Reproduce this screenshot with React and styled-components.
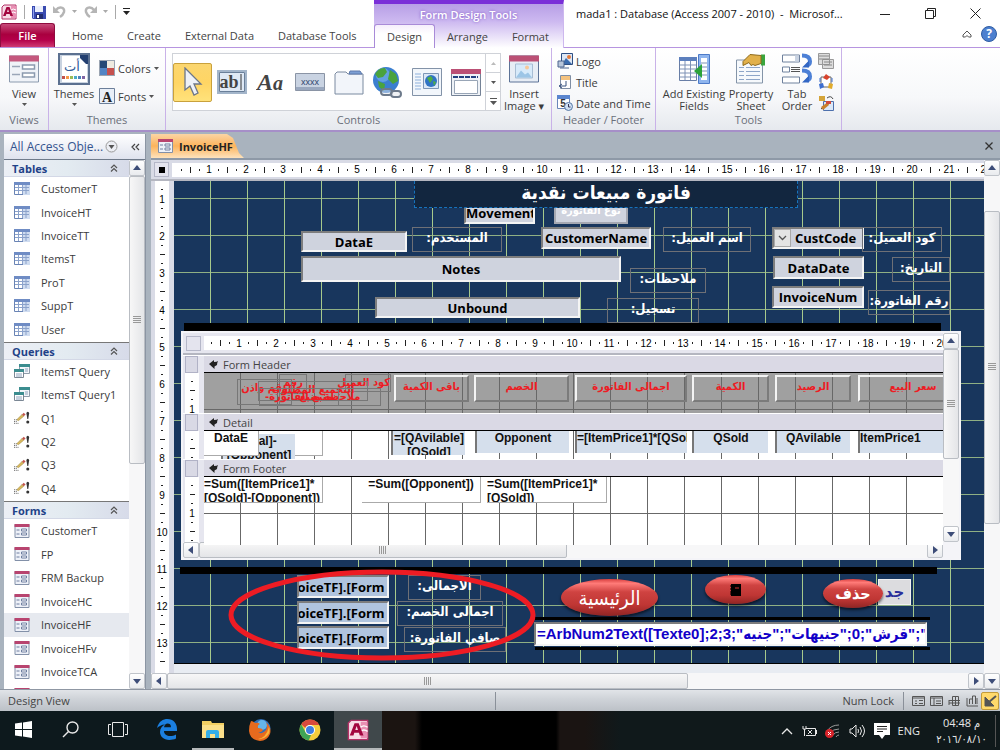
import React from "react";
import styled, { createGlobalStyle, css } from "styled-components";

const GlobalStyle = createGlobalStyle`
  * {
    box-sizing: border-box;
  }

  body {
    margin: 0;
    background: #a9b3be;
    font-family: "Open Sans", "DejaVu Sans", sans-serif;
    font-size: 11px;
    color: #3b3b3b;
  }

  button, input, select, textarea {
    font: inherit;
    color: inherit;
    margin: 0;
    padding: 0;
    border: 0;
    border-radius: 0;
    background: none;
    outline: none;
  }

  svg {
    display: block;
    flex: none;
  }
`;

const Shell = styled.div`
  display: flex;
  flex-direction: column;
  height: 100vh;
  overflow: hidden;
`;

/* ---------- title bar and tabs ---------- */

const Header = styled.header`
  display: flex;
  flex: none;
  height: 48px;
  background: #fff;
`;

const HeaderLeft = styled.div`
  display: flex;
  flex-direction: column;
  width: 374px;
  border-bottom: 1px solid #b795e0;
`;

const QuickAccess = styled.div`
  display: flex;
  align-items: center;
  gap: 7px;
  height: 24px;
  padding: 0 1px;
`;

const QuickButton = styled.button`
  display: flex;
  align-items: center;
  gap: 6px;
`;

const Divider = styled.span`
  width: 1px;
  height: 14px;
  background: #a9a9a9;
`;

const Tabs = styled.nav`
  display: flex;
  flex: 1;
`;

const Tab = styled.button`
  flex: none;
  padding: 0 12px;
  height: 24px;
  color: #444;
  white-space: nowrap;

  ${(p) =>
    p.$file &&
    css`
      width: 55px;
      margin-right: 5px;
      color: #fff;
      font-weight: 600;
      border-radius: 3px 3px 0 0;
      border: 1px solid #8f0c3f;
      border-bottom: 0;
      background: linear-gradient(#c64a78, #a9003f 45%, #b5004a 70%, #cf3a72);
    `}

  ${(p) =>
    p.$active &&
    css`
      border: 1px solid #a98bd8;
      border-bottom: 0;
      border-radius: 3px 3px 0 0;
      background: linear-gradient(#f6effc, #fff 40%);
    `}
`;

const Context = styled.div`
  display: flex;
  flex-direction: column;
  width: 190px;
  border-top: 4px solid #7a2fd8;
  border-right: 1px solid #cdb8ee;
  background: linear-gradient(#b79fe6, #cdb9f0 40%, #fff);
`;

const ContextTitle = styled.div`
  height: 20px;
  line-height: 21px;
  text-align: center;
  font-weight: 600;
  color: #fff;
  text-shadow: 0 0 3px #7b4fc4;
`;

const HeaderRight = styled.div`
  display: flex;
  flex-direction: column;
  flex: 1;
  min-width: 0;
  border-bottom: 1px solid #b795e0;
`;

const TitleRow = styled.div`
  display: flex;
  align-items: center;
  height: 26px;
  padding: 0 19px 0 12px;
  color: #111;
`;

const Title = styled.h1`
  flex: 1;
  margin: 0;
  font-size: 11px;
  font-weight: 400;
  white-space: nowrap;
`;

const WindowButtons = styled.div`
  display: flex;
  gap: 34px;
`;

const HelpRow = styled.div`
  display: flex;
  justify-content: flex-end;
  align-items: center;
  gap: 9px;
  padding-right: 3px;
`;

/* ---------- ribbon ---------- */

const RibbonBar = styled.div`
  display: flex;
  flex: none;
  height: 84px;
  background: linear-gradient(#fff, #f7f8fa 60%, #e6e9ee);
  border-bottom: 2px solid #a68fc8;
`;

const Group = styled.section`
  display: flex;
  flex-direction: column;
  width: ${(p) => p.$width}px;
  border-right: 1px solid #c9b2e8;
`;

const GroupBody = styled.div`
  display: flex;
  flex: 1;
  align-items: flex-start;
  gap: ${(p) => p.$gap || 0}px;
  padding: 5px ${(p) => p.$pad || 0}px 0;
`;

const GroupName = styled.div`
  height: 18px;
  line-height: 16px;
  text-align: center;
  color: #6a6f7a;
`;

const BigButton = styled.button`
  display: flex;
  flex-direction: column;
  align-items: center;
  width: ${(p) => p.$width}px;
  gap: 3px;
  line-height: 12px;
  white-space: nowrap;

  > svg:first-child {
    height: 32px;
  }
`;

const SmallColumn = styled.div`
  display: flex;
  flex-direction: column;
  gap: ${(p) => p.$gap}px;
  padding-top: ${(p) => p.$top || 0}px;
`;

const SmallButton = styled.button`
  display: flex;
  align-items: center;
  gap: 3px;
  height: 16px;
  white-space: nowrap;
`;

const Gallery = styled.div`
  display: flex;
  width: 329px;
  height: 58px;
  background: #fff;
  border: 1px solid #cfd2d8;
`;

const GalleryItem = styled.button`
  display: flex;
  align-items: center;
  justify-content: center;
  align-self: center;
  width: 39px;
  height: 39px;
  border-radius: 2px;
  ${(p) =>
    p.$on &&
    css`
      border: 1px solid #c9a13c;
      background: linear-gradient(#fbd66f, #ffd564 50%, #ffe27b);
    `}
`;

const GalleryScroll = styled.div`
  display: flex;
  flex-direction: column;
  flex: 1;
  border-left: 1px solid #cfd2d8;
`;

const GalleryArrow = styled.button`
  display: flex;
  flex: 1;
  align-items: center;
  justify-content: center;
  border-bottom: 1px solid #cfd2d8;

  &:last-child {
    border-bottom: 0;
  }
`;

/* ---------- navigation pane ---------- */

const Work = styled.main`
  display: flex;
  flex: 1;
  min-height: 0;
  gap: 5px;
  padding: 2px 0 0 4px;
  background: #a9b3be;
`;

const NavPane = styled.aside`
  display: flex;
  flex-direction: column;
  width: 142px;
  background: #fff;
  border-right: 1px solid #8b95a3;
`;

const NavHeader = styled.div`
  display: flex;
  align-items: center;
  height: 26px;
  flex: none;
  padding: 0 5px 0 6px;
  color: #34548f;
  font-size: 12px;
  background: linear-gradient(#fff, #dfe3ee);
  border-bottom: 1px solid #6f7a8a;

  span {
    flex: 1;
    white-space: nowrap;
  }
`;

const NavBody = styled.div`
  display: flex;
  flex: 1;
  min-height: 0;
`;

const NavLists = styled.div`
  flex: 1;
  overflow: hidden;
`;

const NavHeading = styled.h2`
  display: flex;
  align-items: center;
  justify-content: space-between;
  height: 17px;
  margin: 0;
  padding: 0 11px 0 8px;
  font-size: 11px;
  font-weight: 700;
  color: #1f4288;
  background: linear-gradient(90deg, #eceff5, #e3ebf1 50%, #d7dbe9);
  border-bottom: 1px solid #d3d8e6;
`;

const NavList = styled.ul`
  display: flex;
  flex-direction: column;
  height: ${(p) => p.$height}px;
  margin: 0;
  padding: 0 0 1px;
  list-style: none;
  border-bottom: 1px solid #777;
`;

const NavItem = styled.li`
  display: flex;
  flex: 1;
  align-items: center;
  gap: 11px;
  padding-left: 10px;
  white-space: nowrap;
  background: ${(p) => (p.$on ? "#e6e9ef" : "none")};

  svg {
    width: 16px;
  }
`;

/* ---------- scroll bars ---------- */

const Bar = styled.div`
  display: flex;
  flex: none;
  flex-direction: ${(p) => (p.$across ? "row" : "column")};
  ${(p) => (p.$across ? "height: 16px;" : "width: 16px;")}
  background: #f7f7f8;
`;

const BarButton = styled.button`
  display: flex;
  align-items: center;
  justify-content: center;
  width: 16px;
  height: 16px;
  flex: none;
  border: 1px solid #c0c4ca;
  border-radius: 2px;
  background: linear-gradient(#fff, #e9ebee);
`;

const BarSpace = styled.div`
  flex: ${(p) => p.$size} 1 0;
`;

const BarThumb = styled(BarSpace)`
  display: flex;
  align-items: center;
  justify-content: center;
  border: 1px solid #b9bdc3;
  border-radius: 2px;
  background: linear-gradient(
    ${(p) => (p.$across ? "180deg" : "90deg")},
    #f7f7f7,
    #e4e5e8
  );
`;

const Grip = styled.span`
  width: 8px;
  height: 8px;
  background: repeating-linear-gradient(
    ${(p) => (p.$across ? "90deg" : "180deg")},
    #999 0 1px,
    transparent 1px 2px
  );
`;

/* ---------- document ---------- */

const Doc = styled.section`
  display: flex;
  flex: 1;
  flex-direction: column;
  min-width: 0;
`;

const DocTabs = styled.div`
  display: flex;
  align-items: center;
  justify-content: space-between;
  height: 24px;
  flex: none;
  padding-right: 7px;
  color: #333;
`;

const DocTab = styled.button`
  display: flex;
  align-items: center;
  gap: 6px;
  align-self: stretch;
  width: 93px;
  padding-left: 7px;
  font-weight: 700;
  color: #222;
  clip-path: polygon(0 0, 76px 0, 82px 4px, 88px 19px, 93px 24px, 0 24px);
  background: linear-gradient(#fbd5a5, #fcb45c 50%, #fde2bd);
`;

const DocBody = styled.div`
  display: flex;
  flex: 1;
  min-height: 0;
  border-top: 2px solid #8e99a7;
  background: #d9dbe6;
`;

const DocMain = styled.div`
  display: flex;
  flex: 1;
  flex-direction: column;
  min-width: 0;
`;

const RulerRow = styled.div`
  display: flex;
  align-items: center;
  height: ${(p) => p.$height}px;
  gap: 3px;
  padding-left: 3px;
  flex: none;
  border-bottom: 2px solid #b4b6c0;
`;

const Corner = styled.div`
  display: flex;
  align-items: center;
  justify-content: center;
  width: 15px;
  height: 15px;
  border: 1px solid #b5b7c8;
  background: #e4e4ee;
`;

const RulerTrack = styled.div`
  display: flex;
  flex: 1;
  height: 14px;
  overflow: hidden;
  padding-left: ${(p) => p.$inset}px;
  background: #fff;
  font: 10px "Liberation Sans", Arial, sans-serif;
  color: #000;
`;

const Tick = styled.span`
  display: flex;
  align-items: center;
  justify-content: center;
  flex: none;
  width: ${(p) => (p.$last ? 10 : 9)}px;

  &::before {
    content: "";
    width: 1px;
    height: ${(p) => p.$length}px;
    background: #222;
  }
`;

const Row = styled.div`
  display: flex;
  flex: 1;
  min-height: 0;
`;

const SideRuler = styled.div`
  display: flex;
  flex-direction: column;
  width: 14px;
  margin: 0 5px 0 4px;
  padding-top: 4px;
  overflow: hidden;
  background: #fff;
  font: 10px "Liberation Sans", Arial, sans-serif;
  color: #000;
`;

const SideTick = styled.span`
  display: flex;
  align-items: center;
  justify-content: center;
  flex: none;
  height: ${(p) => (p.$last ? 10 : 9)}px;

  &::before {
    content: "";
    height: 1px;
    width: ${(p) => p.$length}px;
    background: #222;
  }
`;

const CanvasArea = styled.div`
  flex: 1;
  min-width: 0;
  overflow: hidden;
  background: #e8ecf2;
`;

const Canvas = styled.div`
  position: relative;
  height: 483px;
  overflow: hidden;
  border-bottom: 1px solid #000;
  background-color: #18365d;
  background-image: linear-gradient(90deg, #a6c98c 1px, transparent 1px),
    linear-gradient(#8fb084 1px, transparent 1px);
  background-size: 37px 37px;
  background-position: 36px 17px;
  font-size: 13px;
`;

/* every control on the design surface has its own place: x, y, w, h */
const place = css`
  position: absolute;
  left: ${(p) => p.$at[0]}px;
  top: ${(p) => p.$at[1]}px;
  width: ${(p) => p.$at[2]}px;
  height: ${(p) => p.$at[3]}px;
`;

const FormTitle = styled.div`
  ${place}
  direction: rtl;
  text-align: center;
  color: #fff;
  font: bold 19px/22px "DejaVu Sans Condensed", "DejaVu Sans", sans-serif;
  background: #12263f;
  border: 1px dashed #1673bd;
  border-top: 0;
`;

const sunken = css`
  border: 2px solid #f4f4f4;
  border-top-color: #7d7d7d;
  border-left-color: #7d7d7d;
`;

const Field = styled.input`
  ${place}
  ${sunken}
  text-align: center;
  font-weight: 700;
  color: #000;
  background: ${(p) => (p.$total ? "#b0c4de" : "#cfd3de")};
  text-indent: ${(p) => (p.$total ? -4 : 0)}px;
`;

const AmountField = styled(Field)`
  text-align: left;
  padding-left: 1px;
  font: bold 15px "Liberation Sans", "DejaVu Sans Condensed", "DejaVu Sans", sans-serif;
  color: #1200c8;
  background: #fff;
`;

const Combo = styled.div`
  ${place}
  ${sunken}
  display: flex;
  background: #cfd3de;

  select {
    appearance: none;
    flex: 1;
    min-width: 0;
    padding-left: 4px;
    font-weight: 700;
    color: #000;
  }
`;

const ComboArrow = styled.span`
  display: flex;
  align-items: center;
  justify-content: center;
  width: 17px;
  background: #e4e4e4;
  border: 1px solid #aaa;
`;

const Label = styled.label`
  ${place}
  direction: rtl;
  text-align: center;
  white-space: nowrap;
  color: #fff;
  font: bold 13px/20px "DejaVu Sans Condensed", "DejaVu Sans", sans-serif;
  border: 1px solid #6e7076;
`;

const TypeLabel = styled(Label)`
  border: 2px solid #a5a8b2;
  border-top: 0;
  background: #cfd3de;
  font-size: 11px;
  line-height: 14px;
`;

const Line = styled.div`
  ${place}
  background: #000;
`;

const RedButton = styled.button`
  ${place}
  border-radius: 50%;
  display: flex;
  justify-content: center;
  align-items: center;
  color: #fff;
  font: bold 16px "DejaVu Sans Condensed", "DejaVu Sans", sans-serif;
  background: linear-gradient(#d9403f, #ff7b78 12%, #cf4341 35%, #bf3634 70%, #8f2524);
  box-shadow: 0 2px 3px rgba(0, 0, 0, 0.6);

  ${(p) =>
    p.$big &&
    css`
      font-size: 20px;
      font-weight: 400;
    `}
`;

const PlainButton = styled.button`
  ${place}
  color: #2a2f9b;
  font: bold 15px "DejaVu Sans", sans-serif;
  background: #dcdcdf;
  border: 1px solid #f2f2f2;
`;

const Ring = styled.svg`
  ${place}
  pointer-events: none;
`;

/* ---------- sub form ---------- */

const SubForm = styled.div`
  ${place}
  display: flex;
  flex-direction: column;
  border: 2px solid #f4f4f8;
  background: #e6e6ef;
`;

const SubMain = styled.div`
  display: flex;
  flex: 1;
  flex-direction: column;
  min-width: 0;
`;

const Section = styled.section`
  display: grid;
  grid-template-columns: 14px 1fr;
  grid-template-rows: 17px ${(p) => p.$height}px;
  column-gap: 5px;
  padding: 0 0 0 2px;
  border-top: 1px solid #fff;
`;

const SectionCorner = styled.div`
  width: 13px;
  background: #d9d9e5;
  border: 1px solid #b1b2c6;
`;

const SectionTitle = styled.h3`
  display: flex;
  align-items: center;
  gap: 4px;
  margin: 0;
  padding-left: 5px;
  font-size: 11px;
  font-weight: 400;
  color: #444;
  background: #dad9e5;
  border-bottom: 1px solid #000;
`;

const SectionRuler = styled(SideRuler)`
  margin: 0;
`;

const SectionGrid = styled.div`
  position: relative;
  overflow: hidden;
  font: bold 12px/14px "Liberation Sans", Arial, sans-serif;
  color: #111;
  background-color: ${(p) => (p.$grey ? "#a0a0a0" : "#fff")};
  background-image: linear-gradient(90deg, #686868 1px, transparent 1px),
    linear-gradient(#686868 1px, transparent 1px);
  background-size: 37px 37px;
  background-position: 36px 36px;
`;

const HeadLabel = styled.div`
  ${place}
  direction: rtl;
  text-align: center;
  white-space: nowrap;
  color: #ed1c24;
  font: bold 11px/20px "DejaVu Sans Condensed", "DejaVu Sans", sans-serif;
  border: 2px solid #7b7b7b;
  border-top-color: #f4f4f4;
  border-left-color: #f4f4f4;
`;

const LooseLabel = styled(HeadLabel)`
  line-height: 16px;
  border: 1px solid #777;
`;

const Cell = styled.textarea`
  ${place}
  resize: none;
  overflow: hidden;
  text-align: ${(p) => p.$align || "center"};
  background: #d5dfec;
  border-left: 2px solid #777;
  white-space: pre;
`;

const WhiteCell = styled(Cell)`
  background: #fff;
  border: 1px solid #aaa;
  border-top: 0;
  border-left-width: 0;
`;

const SubFooter = styled.div`
  display: flex;
  flex: none;
  padding-right: 16px;
  background: #f4f4f8;

  > div {
    width: 100%;
  }
`;

/* ---------- status bar and task bar ---------- */

const StatusBar = styled.footer`
  display: flex;
  align-items: center;
  height: 22px;
  flex: none;
  padding: 0 1px 0 8px;
  color: #444;
  background: linear-gradient(#e1e4e8, #d0d4d9 40%, #bcc1c7);
  border-top: 1px solid #8f97a3;
`;

const StatusPart = styled.span`
  flex: ${(p) => p.$grow} 1 0;
  line-height: 18px;
  border-right: 1px solid #8a9099;
  text-align: ${(p) => p.$align || "left"};
  padding-right: 9px;
`;

const ViewButton = styled.button`
  display: flex;
  align-items: center;
  justify-content: center;
  width: 18px;
  height: 18px;
  ${(p) =>
    p.$on &&
    css`
      border: 1px solid #c29b3a;
      border-radius: 2px;
      background: #ffd96b;
    `}
`;

const ViewButtons = styled.div`
  display: flex;
  padding-left: 5px;
`;

const TaskBar = styled.footer`
  display: flex;
  flex: none;
  height: 39px;
  color: #e8e8e8;
  background: linear-gradient(
    90deg,
    #0d191d 0 334px,
    #1b1411 381px 415px,
    #000 422px 556px,
    #1a1412 560px 585px,
    #10191b 620px
  );
`;

const TaskButton = styled.button`
  display: flex;
  align-items: center;
  justify-content: center;
  width: ${(p) => p.$width || 48}px;
  border-bottom: 2px solid ${(p) => (p.$open ? "#b5b9ba" : "transparent")};
  background: ${(p) => (p.$on ? "#40484b" : "none")};
`;

const Tray = styled.div`
  display: flex;
  align-items: center;
  gap: 8px;
  margin-left: auto;
  padding-right: 4px;
`;

const Clock = styled.time`
  width: 68px;
  line-height: 16px;
  text-align: center;
  border-right: 1px solid #555;
  font-family: "Open Sans", "DejaVu Sans Condensed", "DejaVu Sans", sans-serif;
`;

/* ---------- icons ---------- */

const Caret = ({ color = "#555", up, size = 5 }) => (
  <svg width={size} height="3" viewBox="0 0 6 3" preserveAspectRatio="none">
    <path d={up ? "M0 3L3 0L6 3z" : "M0 0h6L3 3z"} fill={color} />
  </svg>
);

const ARROWS = {
  up: "M0 6L4 1L8 6z",
  down: "M0 2h8L4 7z",
  left: "M6 0v8L1 4z",
  right: "M2 0v8L7 4z",
};

const Arrow = ({ to }) => (
  <svg width="8" height="8" viewBox="0 0 8 8">
    <path d={ARROWS[to]} fill="#3d4d78" />
  </svg>
);

const AccessIcon = ({ size = 16 }) => (
  <svg width={size} height={size} viewBox="0 0 16 16">
    <path d="M3 1h12v14H1V3z" fill="#f7dbe6" stroke="#b53268" />
    <path d="M10 2h5v12h-5z" fill="#e98fb3" />
    <path d="M10 6q2-2 5 0M10 9q2-2 5 0" stroke="#fff" fill="none" />
    <path
      d="M2 12L5.500 3h3L12 12H9.300L8.700 10H5.300L4.700 12zM6 8h2L7 5z"
      fill="#a3063f"
    />
  </svg>
);

const SaveIcon = () => (
  <svg width="14" height="14" viewBox="0 0 14 14">
    <path d="M0 1h14v13H1L0 13z" fill="#3a4bb0" />
    <path d="M3 1h8v6H3z" fill="#e9eefb" />
    <path d="M4 9h7v5H4z" fill="#222c6e" />
    <path d="M5 10h2v3H5z" fill="#fff" />
    <path d="M1 2h1v11H1z" fill="#8fa0ee" />
  </svg>
);

const UndoIcon = ({ flip }) => (
  <svg width="13" height="13" viewBox="0 0 13 13">
    <g transform={flip ? "matrix(-1 0 0 1 13 0)" : undefined}>
      <path
        d="M3 5C6 1 12 2 11 7q-1 3-4 5"
        fill="none"
        stroke="#b5b5b5"
        strokeWidth="2.400"
      />
      <path d="M0 1v7h7z" fill="#b5b5b5" />
    </g>
  </svg>
);

const FormIcon = () => (
  <svg width="15" height="14" viewBox="0 0 15 14">
    <path d="M.5.5h14v13H.5z" fill="#eef1f8" stroke="#8290a8" />
    <path d="M0 0h15v3H0z" fill="#b8446f" />
    <path d="M2 6h3M2 10h3" stroke="#6e7fa0" />
    <path d="M7 5h5v2H7zM7 9h5v2H7z" fill="#fff" stroke="#6e7fa0" />
  </svg>
);

const TableIcon = () => (
  <svg width="16" height="13" viewBox="0 0 16 13">
    <path d="M.5.5h15v12H.5z" fill="#fff" stroke="#6983b4" />
    <path d="M0 0h16v3H0z" fill="#6f8cc4" />
    <path d="M9 3h7v10H9z" fill="#cfdcf0" />
    <path d="M1 5.500h14M1 8.500h14M4.500 3v9M8.500 3v9M12 3v9" stroke="#8ba2cb" />
  </svg>
);

const QueryIcon = () => (
  <svg width="16" height="15" viewBox="0 0 16 15">
    <path d="M5.500.5h10v9h-10z" fill="#f3f6fa" stroke="#8f9cab" />
    <path d="M5 0h11v3H5z" fill="#3b8d8f" />
    <path d="M.5 5.500h9v8h-9z" fill="#fff" stroke="#7b8794" />
    <path d="M0 5h10v3H0z" fill="#3b8d8f" />
    <path d="M2 10h6M2 12h6M11 5h3M11 7h3" stroke="#8fa3bd" />
  </svg>
);

const ActionIcon = () => (
  <svg width="18" height="16" viewBox="0 0 18 14">
    <path d="M3 9L9 3l2 2-6 5z" fill="#d9b95d" stroke="#8e7835" strokeWidth=".5" />
    <path d="M9 3l2-2 2 2-2 2z" fill="#c2564e" />
    <path d="M0 9h1M0 11h1M0 13h1M2 11h1M2 13h1M4 13h1M2 9h1" stroke="#444" />
    <path d="M14 2q0-2 1.500-2T17 2l-1 6h-1z" fill="#333" />
    <circle cx="15.500" cy="11.500" r="1.700" fill="#333" />
  </svg>
);

const ChevronsUp = () => (
  <svg width="8" height="8" viewBox="0 0 8 8">
    <path d="M1 4l3-3 3 3M1 7.500l3-3 3 3" fill="none" stroke="#555" strokeWidth="1.200" />
  </svg>
);

const ChevronsLeft = () => (
  <svg width="9" height="8" viewBox="0 0 9 8">
    <path d="M4 1L1 4l3 3M8 1L5 4l3 3" fill="none" stroke="#444" strokeWidth="1.200" />
  </svg>
);

const RoundMenu = () => (
  <svg width="13" height="13" viewBox="0 0 13 13">
    <circle cx="6.500" cy="6.500" r="5.500" fill="#eceef4" stroke="#999" />
    <path d="M3.500 5h6l-3 4z" fill="#555" />
  </svg>
);

const ViewIcon = () => (
  <svg width="30" height="27" viewBox="0 0 30 27">
    <path d="M.5.5h29v26H.5z" fill="#f0f3f8" stroke="#8b9aae" />
    <path d="M0 0h30v6H0z" fill="#c4577d" />
    <path d="M3 11h8M3 19h8" stroke="#9aa6b8" strokeWidth="1.500" />
    <path d="M13.500 9.500h12v4h-12zM13.500 17.500h12v4h-12z" fill="#fff" stroke="#8b9aae" strokeWidth="1.500" />
  </svg>
);

const ThemesIcon = () => (
  <svg width="32" height="32" viewBox="0 0 32 32">
    <path d="M1 1h30v30H1z" fill="#c9d3e0" stroke="#5b7090" strokeWidth="2" />
    <path d="M4 3h18l7 7v19H4z" fill="#fff" />
    <path d="M22 2h8v9h-2l-6-6z" fill="#233f70" />
    <text x="14" y="18" textAnchor="middle" fontSize="13" fontFamily="DejaVu Sans" fill="#2f5a99">
      أت
    </text>
    {["#c0504d", "#f79646", "#9bbb59", "#4bacc6", "#4f81bd", "#8064a2"].map((c, i) => (
      <rect key={c} x={4 + i * 4} y="23" width="3" height="3" fill={c} />
    ))}
  </svg>
);

const ColorsIcon = () => (
  <svg width="16" height="16" viewBox="0 0 16 16">
    <path d="M0 0h16v16H0z" fill="#9aa4b2" />
    <path d="M1 1h7v7H1z" fill="#244877" />
    <path d="M8 1h7v7H8z" fill="#eeeae0" />
    <path d="M1 8h7v7H1z" fill="#5284c4" />
    <path d="M8 8h7v7H8z" fill="#c5504e" />
  </svg>
);

const FontsIcon = () => (
  <svg width="16" height="16" viewBox="0 0 16 16">
    <path d="M.5.5h15v15H.5z" fill="#e9eff8" stroke="#6c7f9a" />
    <text x="8" y="14" textAnchor="middle" fontSize="14" fontWeight="bold" fontFamily="Liberation Serif" fill="#222">
      A
    </text>
  </svg>
);

const PointerIcon = () => (
  <svg width="20" height="30" viewBox="0 0 20 30">
    <path
      d="M2 1v22l5-4 4 9 4-2-4-9h7z"
      fill="#eef1f7"
      stroke="#6c7688"
      strokeWidth="1.300"
    />
  </svg>
);

const TextBoxIcon = () => (
  <svg width="30" height="24" viewBox="0 0 30 24">
    <path d="M1 1h28v22H1z" fill="#dfe9f5" stroke="#a3b5ca" strokeWidth="2" />
    <path d="M2.500 2.500h25v19h-25z" fill="none" stroke="#6a7f99" />
    <text x="12" y="18" textAnchor="middle" fontSize="18" fontWeight="bold" fontFamily="Liberation Serif" fill="#444">
      ab
    </text>
    <path d="M24 4v16" stroke="#333" />
  </svg>
);

const LabelIcon = () => (
  <svg width="30" height="26" viewBox="0 0 30 26">
    <text x="1" y="21" fontSize="24" fontStyle="italic" fontWeight="bold" fontFamily="Liberation Serif" fill="#444">
      A
    </text>
    <text x="17" y="21" fontSize="20" fontStyle="italic" fontWeight="bold" fontFamily="Liberation Serif" fill="#444">
      a
    </text>
  </svg>
);

const ButtonIcon = () => (
  <svg width="30" height="18" viewBox="0 0 30 18">
    <path d="M.5.5h29v17H.5z" fill="#c9d3e2" stroke="#8a94a5" />
    <path d="M1 14h28v3H1z" fill="#9aa8bf" />
    <text x="15" y="12" textAnchor="middle" fontSize="9" fontFamily="Liberation Sans" fill="#30456f">
      xxxx
    </text>
  </svg>
);

const TabIcon = () => (
  <svg width="30" height="26" viewBox="0 0 30 26">
    <path d="M1 25V5l2-2h9l2 2h15v20z" fill="#f2f5fa" stroke="#7b8aa0" />
    <path d="M15 5l1-3h10l2 3z" fill="#7d9fd4" stroke="#5c79ab" />
  </svg>
);

const GlobeIcon = () => (
  <svg width="31" height="32" viewBox="0 0 31 32">
    <circle cx="14" cy="14" r="13" fill="#3b7fd0" />
    <circle cx="11" cy="9" r="7" fill="#7db8ee" opacity=".6" />
    <path d="M3 8q4-7 10-6l2 4-4 5-5 1zM18 4l6 4 2 7-5 3-5-5zM6 15l7 3-1 7-5-4z" fill="#4aa33e" />
    <g fill="#dfe4ea" fillOpacity=".5" stroke="#6d7a8b" strokeWidth="2">
      <rect x="9" y="23" width="11" height="6" rx="3" />
      <rect x="19" y="25" width="10" height="6" rx="3" />
    </g>
  </svg>
);

const WebIcon = () => (
  <svg width="30" height="28" viewBox="0 0 30 28">
    <path d="M.5.5h29v27H.5z" fill="#f2f6fb" stroke="#8393a8" />
    <path d="M3 6h6M3 9h6M3 12h6M3 15h6M3 18h6M3 21h6" stroke="#8db0dc" />
    <path d="M11.500 5.500h15v15h-15z" fill="#dbe8f7" stroke="#7d96b7" />
    <circle cx="19" cy="13" r="6" fill="#2f73c4" />
    <path d="M15 10l4-2 2 3-3 4zM21 13l3 1-2 4z" fill="#4fae45" />
  </svg>
);

const NavControlIcon = () => (
  <svg width="30" height="27" viewBox="0 0 30 27">
    <path d="M.5.5h29v26H.5z" fill="#eef2f7" stroke="#748296" />
    <path d="M0 0h30v5H0z" fill="#bb5075" />
    <path d="M2 8h25" stroke="#233f80" strokeWidth="2" strokeDasharray="5 1" />
    <path d="M3.500 11.500h23v13h-23z" fill="#fff" stroke="#98a5b6" />
  </svg>
);

const PictureIcon = () => (
  <svg width="30" height="27" viewBox="0 0 30 27">
    <path d="M.5.5h29v26H.5z" fill="#e7edf5" stroke="#5d7397" />
    <path d="M0 0h30v6H0z" fill="#bb5075" />
    <path d="M6.500 8.500h17v14h-17z" fill="#d7eafa" stroke="#a7bdd4" />
    <path d="M7 22l5-7 4 4 3-2 4 5z" fill="#9cc5e6" />
    <circle cx="18" cy="12" r="2" fill="#f8c898" />
  </svg>
);

const LogoIcon = () => (
  <svg width="16" height="16" viewBox="0 0 16 16">
    <path d="M4.500.5h11v11h-11z" fill="#dce7f5" stroke="#2f4f83" />
    <path d="M5 11l4-6 6 6z" fill="#3c6cae" />
    <circle cx="12" cy="4" r="2" fill="#e47a3b" />
    <path d="M1 8h6v6H1zM3 15h9" fill="#b8c6da" stroke="#4d658e" />
  </svg>
);

const TitleIcon = () => (
  <svg width="16" height="16" viewBox="0 0 16 16">
    <path d="M3.500 1.500h10v13h-10z" fill="#fff" stroke="#7f8ea4" />
    <path d="M4 2h9v4H4z" fill="#f4c27e" />
    <path d="M9 7v5H3M5 10l-3 2 3 2" fill="none" stroke="#38527f" />
  </svg>
);

const DateIcon = () => (
  <svg width="16" height="16" viewBox="0 0 16 16">
    <path d="M.5.5h12v13H.5z" fill="#fff" stroke="#6a86b9" />
    <path d="M0 0h13v4H0z" fill="#5b86cf" />
    <text x="6" y="12" textAnchor="middle" fontSize="10" fontWeight="bold" fontFamily="Liberation Sans" fill="#333">
      5
    </text>
    <circle cx="11.500" cy="11.500" r="4" fill="#cfe0f3" stroke="#5577a5" />
    <path d="M11.500 9v3h2" fill="none" stroke="#335" />
  </svg>
);

const FieldsIcon = () => (
  <svg width="32" height="30" viewBox="0 0 32 30">
    <path d="M1.500 3.500h17v23h-17z" fill="#fff" stroke="#687ea6" />
    <path d="M1 3h18v4H1z" fill="#5c7fbd" />
    <path d="M2 11h16M2 15h16M2 19h16M2 23h16M7 7v19M12.500 7v19" stroke="#7e92b5" />
    <path d="M20.500.5h11v29h-11z" fill="#8fb5ee" stroke="#4c7ac8" />
    <path d="M23 4h6v22h-6z" fill="#fff" />
    <path d="M23 9h6M23 13h6M23 17h6M23 21h6" stroke="#7e92b5" />
    <path d="M24 10v14l-8-7z" fill="#2ca33a" />
  </svg>
);

const SheetIcon = () => (
  <svg width="32" height="31" viewBox="0 0 32 31">
    <path d="M1.500 6.500h26v23h-26z" fill="#f6f9fc" stroke="#8494a8" />
    <path d="M4 14h5M4 18h5M4 22h5M4 26h5M11 14h14M11 18h14M11 22h14M11 26h14" stroke="#8ea6c8" />
    <path d="M26 1h4v11h-4z" fill="#3aa53d" />
    <path d="M26 2L15 1 8 8v4l6-3 2 3 2-1 2 1 6-2z" fill="#e1b04a" stroke="#8e6a1c" />
  </svg>
);

const OrderIcon = () => (
  <svg width="32" height="31" viewBox="0 0 32 31">
    <g fill="#fff" stroke="#6f819d">
      <path d="M1.500 1.500h17v7h-17zM1.500 13.500h7v5h-7zM1.500 23.500h17v6h-17z" />
    </g>
    <path d="M14 2h4v6h-4z" fill="#c9d3e2" />
    <path d="M10 14h9M10 16h9M10 18h9" stroke="#555" />
    <path d="M21 2q8 0 8 6 0 3-3 4M21 17q8 0 8 6 0 3-3 4" fill="none" stroke="#4d80d6" strokeWidth="4" />
    <path d="M28 7v7h-7zM28 22v7h-7z" fill="#3367c4" />
  </svg>
);

const SubformIcon = () => (
  <svg width="16" height="16" viewBox="0 0 16 16">
    <path d="M.5.5h11v11H.5zM4.500 6.500h11v9h-11z" fill="#ddd" stroke="#999" />
    <path d="M1 3h10M1 6h10M6 9h8M6 12h8" stroke="#888" />
  </svg>
);

const CodeIcon = () => (
  <svg width="16" height="16" viewBox="0 0 16 16">
    <path d="M3 3h10v10H3z" fill="#fff" stroke="#666" />
    <path d="M8 0l4 3-3 3-4-2z" fill="#d8442e" />
    <path d="M1 10l4-1 1 4-4 2z" fill="#3e6fd0" />
    <path d="M11 9l4 1-1 5-4-1z" fill="#e0ab2c" />
    <path d="M2 4v4M14 4v4" stroke="#3e6fd0" />
  </svg>
);

const MacroIcon = () => (
  <svg width="16" height="16" viewBox="0 0 16 16">
    <path d="M5.500 6.500h10v9h-10z" fill="#dbe8f8" stroke="#4d70ad" />
    <path d="M1 1h6v5H1z" fill="#d5a53a" />
    <path d="M9 3q4-3 6 1M3 14l9-7" fill="none" stroke="#444" />
    <path d="M3 12l7-5 1 3-6 5z" fill="#c8812c" />
    <path d="M8 6h5v3H8z" fill="#cf4b3d" />
  </svg>
);

const SectionArrow = () => (
  <svg width="10" height="9" viewBox="0 0 10 9">
    <path d="M0 4l5-4v2q3 0 4-1Q8 3 8 5L5.500 6.500V9z" fill="#222" />
  </svg>
);

const BookIcon = () => (
  <svg width="11" height="12" viewBox="0 0 11 12">
    <path d="M1 0h10v12H1z" fill="#000" />
    <path d="M0 2h2M0 5h2M0 8h2M0 10h2" stroke="#000" />
    <path d="M5 4h4" stroke="#c33" />
  </svg>
);

const MiniView = ({ kind }) => (
  <svg width="13" height="12" viewBox="0 0 13 12" fill="none" stroke="#555">
    {kind === "form" && <path d="M.5 1.500h12v9H.5zM1 3h11M3 6h2M7 5.500h4M3 8.500h2M7 8.500h4" />}
    {kind === "data" && <path d="M.5 1.500h12v9H.5zM1 3h11M4 3v8M6 6h5M6 8.500h5" />}
    {kind === "pivot" && <path d="M4.500 1.500h6v9h-6zM1 5.500h11M1 8h11M7.500 1v9M1 5v5" />}
    {kind === "chart" && <path d="M3.500 9V4h3v5M6.500 9V1h3v8M1 3v8h11M11 3v6" />}
    {kind === "design" && (
      <>
        <path d="M1 2v9h9z" fill="#555" />
        <path d="M5 7l7-6" strokeWidth="2" />
      </>
    )}
  </svg>
);

const Windows = () => (
  <svg width="17" height="17" viewBox="0 0 17 17" fill="#fff">
    <path d="M0 2.500L7 1.500V8H0zM8 1.400L17 0v8H8zM0 9h7v6.500L0 14.500zM8 9h9v8L8 15.600z" />
  </svg>
);

const Search = () => (
  <svg width="17" height="17" viewBox="0 0 17 17" fill="none" stroke="#e8e8e8" strokeWidth="1.400">
    <circle cx="10.500" cy="6.500" r="5.500" />
    <path d="M6.500 10.500L1 16" />
  </svg>
);

const TaskView = () => (
  <svg width="20" height="15" viewBox="0 0 20 15" fill="none" stroke="#e8e8e8">
    <path d="M4.500.5h11v14h-11zM3 2.500H.5v10H3M17 2.500h2.500v10H17" />
  </svg>
);

const Edge = () => (
  <svg width="20" height="21" viewBox="0 0 20 21">
    <path
      d="M0 9C2 2 6 0 10.500 0 16 0 20 4 20 10v2H7c0 3.500 3 5 6 5 2.200 0 4.300-.6 6-1.600v4.200C17 20.600 14.800 21 12.300 21 6.500 21 3 17.300 3 13c0-3.600 2-6 5-7.600C4.500 5.600 2 7 0 9zm7-.7h7C14 5.500 12.500 4.500 10.700 4.500 8.800 4.500 7.400 6 7 8.300z"
      fill="#1b7fe0"
    />
  </svg>
);

const Folder = () => (
  <svg width="22" height="19" viewBox="0 0 22 19">
    <path d="M0 1h9l1 2h12v15H0z" fill="#f2cf63" />
    <path d="M0 5h22v13H0z" fill="#fbe08b" />
    <path d="M4 18v-6q0-2 2-2h9q2 0 2 2v6h-4v-4H8v4z" fill="#35aee8" />
  </svg>
);

const Firefox = () => (
  <svg width="22" height="22" viewBox="0 0 22 22">
    <circle cx="12" cy="9.500" r="9.500" fill="#2f6fb8" />
    <circle cx="13" cy="6" r="5" fill="#65b5e8" />
    <path
      d="M2 2q2 0 4 2 3-1 5 1-3 1-2 4 4 0 5 2-2 3-5 2 4 3 8-2 2-4 0-8 6 6 4 12-3 7-10 7Q1 21 0 12q0-6 2-10z"
      fill="#e66a1e"
    />
    <path d="M20 8q2 5-2 9-4 4-9 3 8-1 11-12z" fill="#f8b33a" />
  </svg>
);

const Chrome = () => (
  <svg width="22" height="22" viewBox="0 0 22 22">
    <circle cx="11" cy="11" r="10.500" fill="#f5cd3c" />
    <path d="M11 .5a10.500 10.500 0 0 1 9.300 5.500H11a5 5 0 0 0-4.600 3L2.200 5.300A10.500 10.500 0 0 1 11 .5z" fill="#d94a3d" />
    <path d="M2.200 5.300L6.700 13.500A5 5 0 0 0 12 16l-2.300 5.400A10.500 10.500 0 0 1 2.200 5.300z" fill="#3fa556" />
    <circle cx="11" cy="11" r="5" fill="#fff" />
    <circle cx="11" cy="11" r="4" fill="#3f7fe0" />
  </svg>
);

/* ---------- pieces ---------- */

const ScrollBar = ({ across, before = 0, size, after }) => (
  <Bar $across={across}>
    <BarButton aria-label="Scroll back">
      <Arrow to={across ? "left" : "up"} />
    </BarButton>
    {before > 0 && <BarSpace $size={before} />}
    <BarThumb $across={across} $size={size}>
      <Grip $across={across} />
    </BarThumb>
    <BarSpace $size={after} />
    <BarButton aria-label="Scroll forward">
      <Arrow to={across ? "right" : "down"} />
    </BarButton>
  </Bar>
);

const NumberTick = styled(Tick)`
  &::before {
    content: none;
  }
`;

const SideNumber = styled(SideTick)`
  &::before {
    content: none;
  }
`;

const count = (n) => Array.from({ length: n }, (_, i) => i + 1);

const Ruler = ({ units, inset }) => (
  <RulerTrack $inset={inset}>
    {count(units).map((n) => (
      <React.Fragment key={n}>
        <Tick $length={2} />
        <Tick $length={6} />
        <Tick $length={2} />
        <NumberTick $last>{n}</NumberTick>
      </React.Fragment>
    ))}
  </RulerTrack>
);

const SideUnits = ({ units, skip }) =>
  count(units).map((n) => (
    <React.Fragment key={n}>
      {(n > 1 || !skip) && <SideTick $length={2} />}
      {(n > 1 || !skip) && <SideTick $length={5} />}
      <SideTick $length={2} />
      <SideNumber $last>{n}</SideNumber>
    </React.Fragment>
  ));

const NAV = [
  {
    name: "Tables",
    height: 166,
    icon: TableIcon,
    items: ["CustomerT", "InvoiceHT", "InvoiceTT", "ItemsT", "ProT", "SuppT", "User"],
  },
  {
    name: "Queries",
    height: 142,
    icon: QueryIcon,
    items: ["ItemsT Query", "ItemsT Query1", "Q1", "Q2", "Q3", "Q4"],
  },
  {
    name: "Forms",
    height: 190,
    icon: FormIcon,
    items: ["CustomerT", "FP", "FRM Backup", "InvoiceHC", "InvoiceHF", "InvoiceHFv", "InvoiceTCA", ""],
  },
];

const TopBar = () => (
  <Header>
    <HeaderLeft>
      <QuickAccess>
        <AccessIcon />
        <Divider />
        <QuickButton aria-label="Save">
          <SaveIcon />
        </QuickButton>
        <QuickButton aria-label="Undo">
          <UndoIcon />
          <Caret color="#aaa" />
        </QuickButton>
        <QuickButton aria-label="Redo">
          <UndoIcon flip />
          <Caret color="#aaa" />
        </QuickButton>
        <Divider />
        <QuickButton aria-label="Customize">
          <svg width="7" height="7" viewBox="0 0 7 7">
            <path d="M0 0h7v1H0zM0 3h7L3.500 7z" fill="#222" />
          </svg>
        </QuickButton>
      </QuickAccess>
      <Tabs>
        <Tab $file>File</Tab>
        <Tab>Home</Tab>
        <Tab>Create</Tab>
        <Tab>External Data</Tab>
        <Tab>Database Tools</Tab>
      </Tabs>
    </HeaderLeft>
    <Context>
      <ContextTitle>Form Design Tools</ContextTitle>
      <Tabs>
        <Tab $active>Design</Tab>
        <Tab>Arrange</Tab>
        <Tab>Format</Tab>
      </Tabs>
    </Context>
    <HeaderRight>
      <TitleRow>
        <Title>mada1 : Database (Access 2007 - 2010) &nbsp;- &nbsp;Microsof...</Title>
        <WindowButtons>
          <button aria-label="Minimize">
            <svg width="11" height="11" viewBox="0 0 11 11">
              <path d="M0 6.500h10" stroke="#222" />
            </svg>
          </button>
          <button aria-label="Restore">
            <svg width="11" height="11" viewBox="0 0 11 11" fill="none" stroke="#222">
              <path d="M.5 2.500h8v8h-8zM2.500 2V.5h8v8H9" />
            </svg>
          </button>
          <button aria-label="Close">
            <svg width="11" height="11" viewBox="0 0 11 11">
              <path d="M.5.5l10 10M10.500.5l-10 10" stroke="#222" />
            </svg>
          </button>
        </WindowButtons>
      </TitleRow>
      <HelpRow>
        <svg width="10" height="8" viewBox="0 0 10 8" fill="none" stroke="#555">
          <path d="M1 5l4-4 4 4v2H6.500L5 5.500 3.500 7H1z" />
        </svg>
        <svg width="16" height="16" viewBox="0 0 16 16">
          <circle cx="8" cy="8" r="7.500" fill="#4d80cf" stroke="#2f5ca3" />
          <text x="8" y="12" textAnchor="middle" fontSize="12" fontWeight="bold" fill="#fff">
            ?
          </text>
        </svg>
      </HelpRow>
    </HeaderRight>
  </Header>
);

const CONTROLS = [
  ["Select", PointerIcon],
  ["Text Box", TextBoxIcon],
  ["Label", LabelIcon],
  ["Button", ButtonIcon],
  ["Tab Control", TabIcon],
  ["Hyperlink", GlobeIcon],
  ["Web Browser Control", WebIcon],
  ["Navigation Control", NavControlIcon],
];

const Ribbon = () => (
  <RibbonBar>
    <Group $width={49}>
      <GroupBody>
        <BigButton $width={48}>
          <ViewIcon />
          <span>View</span>
          <Caret />
        </BigButton>
      </GroupBody>
      <GroupName>Views</GroupName>
    </Group>
    <Group $width={117}>
      <GroupBody $pad={4} $gap={4}>
        <BigButton $width={42}>
          <ThemesIcon />
          <span>Themes</span>
          <Caret />
        </BigButton>
        <SmallColumn $gap={12} $top={7}>
          <SmallButton>
            <ColorsIcon />
            Colors
            <Caret />
          </SmallButton>
          <SmallButton>
            <FontsIcon />
            Fonts
            <Caret />
          </SmallButton>
        </SmallColumn>
      </GroupBody>
      <GroupName>Themes</GroupName>
    </Group>
    <Group $width={386}>
      <GroupBody $pad={6} $gap={2}>
        <Gallery>
          {CONTROLS.map(([name, Icon], i) => (
            <GalleryItem key={name} $on={i === 0} aria-label={name}>
              <Icon />
            </GalleryItem>
          ))}
          <GalleryScroll>
            <GalleryArrow aria-label="Previous row">
              <Caret up color="#bbb" />
            </GalleryArrow>
            <GalleryArrow aria-label="Next row">
              <Caret />
            </GalleryArrow>
            <GalleryArrow aria-label="More">
              <svg width="7" height="7" viewBox="0 0 7 7">
                <path d="M0 0h7v1H0zM0 3h7L3.500 7z" fill="#555" />
              </svg>
            </GalleryArrow>
          </GalleryScroll>
        </Gallery>
        <BigButton $width={42}>
          <PictureIcon />
          <span>
            Insert
            <br />
            Image ▾
          </span>
        </BigButton>
      </GroupBody>
      <GroupName>Controls</GroupName>
    </Group>
    <Group $width={104}>
      <GroupBody $pad={5}>
        <SmallColumn $gap={5}>
          <SmallButton>
            <LogoIcon />
            Logo
          </SmallButton>
          <SmallButton>
            <TitleIcon />
            Title
          </SmallButton>
          <SmallButton>
            <DateIcon />
            Date and Time
          </SmallButton>
        </SmallColumn>
      </GroupBody>
      <GroupName>Header / Footer</GroupName>
    </Group>
    <Group $width={186}>
      <GroupBody $pad={6}>
        <BigButton $width={64}>
          <FieldsIcon />
          <span>
            Add Existing
            <br />
            Fields
          </span>
        </BigButton>
        <BigButton $width={50}>
          <SheetIcon />
          <span>
            Property
            <br />
            Sheet
          </span>
        </BigButton>
        <BigButton $width={42}>
          <OrderIcon />
          <span>
            Tab
            <br />
            Order
          </span>
        </BigButton>
        <SmallColumn $gap={5}>
          <SmallButton aria-label="Subform in New Window">
            <SubformIcon />
          </SmallButton>
          <SmallButton aria-label="View Code">
            <CodeIcon />
          </SmallButton>
          <SmallButton aria-label="Convert Macros">
            <MacroIcon />
          </SmallButton>
        </SmallColumn>
      </GroupBody>
      <GroupName>Tools</GroupName>
    </Group>
  </RibbonBar>
);

const Navigation = () => (
  <NavPane>
    <NavHeader>
      <span>All Access Obje...</span>
      <RoundMenu />
      <svg width="13" height="8" viewBox="0 0 13 8" />
      <ChevronsLeft />
    </NavHeader>
    <NavBody>
      <NavLists>
        {NAV.map((group) => (
          <div key={group.name}>
            <NavHeading>
              {group.name}
              <ChevronsUp />
            </NavHeading>
            <NavList $height={group.height}>
              {group.items.map((item) => {
                const Icon = /^Q\d/.test(item) ? ActionIcon : group.icon;
                return (
                  <NavItem key={item} $on={item === "InvoiceHF"}>
                    <Icon />
                    {item}
                  </NavItem>
                );
              })}
            </NavList>
          </div>
        ))}
      </NavLists>
      <ScrollBar size={287} after={209} />
    </NavBody>
  </NavPane>
);

const HEADS = [
  ["باقى الكمية", [190, 2, 75, 27]],
  ["الخصم", [270, 2, 95, 27]],
  ["اجمالى الفاتورة", [371, 2, 112, 27]],
  ["الكمية", [488, 2, 77, 27]],
  ["الرصيد", [571, 2, 76, 27]],
  ["سعر البيع", [654, 2, 110, 27]],
];

const LOOSE = [
  ["كود العميل", [141, 1, 46, 18]],
  ["رقم", [75, 1, 28, 20]],
  ["رقم واذن", [33, 6, 55, 26]],
  ["التجميع المطلوب", [54, 8, 110, 20]],
  ["ملاحظة منبع", [75, 15, 102, 18]],
  ["منبع الفاتورة-", [55, 15, 80, 18]],
];

const SubSection = ({ title, height, grey, units, children }) => (
  <Section $height={height}>
    <SectionCorner />
    <SectionTitle>
      <SectionArrow />
      {title}
    </SectionTitle>
    <SectionRuler>
      <SideUnits units={units} />
    </SectionRuler>
    <SectionGrid $grey={grey}>{children}</SectionGrid>
  </Section>
);

const InvoiceLines = () => (
  <SubForm $at={[7, 150, 780, 229]}>
    <Row>
      <SubMain>
        <RulerRow $height={22}>
          <Corner />
          <Ruler units={20} inset={3} />
        </RulerRow>
        <SubSection title="Form Header" height={40} units={1} grey>
          {LOOSE.map(([text, at]) => (
            <LooseLabel key={text} $at={at}>
              {text}
            </LooseLabel>
          ))}
          {HEADS.map(([text, at]) => (
            <HeadLabel key={text} $at={at}>
              {text}
            </HeadLabel>
          ))}
        </SubSection>
        <SubSection title="Detail" height={28} units={1}>
          <WhiteCell aria-label="Number" $at={[60, 0, 59, 25]} defaultValue="" />
          <Cell aria-label="Net" $at={[17, 3, 74, 32]} defaultValue={"    tal]-\n[Opponent]"} />
          <WhiteCell aria-label="DataE" $at={[0, 0, 55, 25]} defaultValue="DataE" />
          <Cell aria-label="Remaining" $at={[187, 0, 74, 24]} defaultValue={"=[QAvilable]\n[QSold]"} />
          <Cell aria-label="Opponent" $at={[271, 0, 94, 22]} defaultValue="Opponent" />
          <Cell
            aria-label="Total"
            $at={[371, 0, 112, 22]}
            $align="left"
            defaultValue="=[ItemPrice1]*[QSold]"
          />
          <Cell aria-label="QSold" $at={[488, 0, 76, 22]} defaultValue="QSold" />
          <Cell aria-label="QAvilable" $at={[571, 0, 75, 22]} defaultValue="QAvilable" />
          <Cell aria-label="ItemPrice1" $at={[654, 0, 110, 22]} $align="left" defaultValue="ItemPrice1" />
        </SubSection>
        <SubSection title="Form Footer" height={68} units={2}>
          <WhiteCell
            aria-label="Net sum"
            $at={[0, 0, 119, 26]}
            $align="left"
            defaultValue={"=Sum([ItemPrice1]*\n[QSold]-[Opponent])"}
          />
          <WhiteCell
            aria-label="Opponent sum"
            $at={[158, 0, 119, 26]}
            defaultValue="=Sum([Opponent])"
          />
          <WhiteCell
            aria-label="Total sum"
            $at={[283, 0, 120, 26]}
            $align="left"
            defaultValue={"=Sum([ItemPrice1]*\n[QSold])"}
          />
        </SubSection>
      </SubMain>
      <ScrollBar size={109} after={68} />
    </Row>
    <SubFooter>
      <ScrollBar across size={366} after={361} />
    </SubFooter>
  </SubForm>
);

const FIELDS = [
  ["movement", "Movement", [290, 21, 71, 22]],
  ["user", "DataE", [127, 50, 106, 21]],
  ["customer", "CustomerName", [367, 46, 110, 22]],
  ["notes", "Notes", [127, 75, 320, 26]],
  ["date", "DataDate", [599, 75, 91, 23]],
  ["number", "InvoiceNum", [598, 105, 92, 22]],
  ["record", "Unbound", [201, 116, 205, 21]],
];

const TOTALS = [
  ["sum", [123, 394, 92, 23]],
  ["discount", [123, 420, 92, 23]],
  ["net", [123, 445, 92, 23]],
];

const LABELS = [
  ["user", "المستخدم:", [238, 46, 90, 25]],
  ["customer", "اسم العميل:", [489, 46, 88, 25]],
  ["code", "كود العميل:", [688, 46, 80, 25]],
  ["date", "التاريخ:", [718, 76, 58, 25]],
  ["notes", "ملاحظات:", [456, 87, 76, 25]],
  ["number", "رقم الفاتورة:", [694, 109, 82, 25]],
  ["record", "تسجيل:", [433, 117, 92, 25]],
  ["sum", "الاجمالى:", [234, 394, 73, 25]],
  ["discount", "اجمالى الخصم:", [223, 420, 106, 25]],
  ["net", "صافي الفاتورة:", [230, 446, 102, 25]],
];

const Design = () => (
  <Canvas>
    {FIELDS.map(([id, value, at]) => (
      <Field key={id} id={id} aria-label={value} $at={at} defaultValue={value} />
    ))}
    <Combo $at={[598, 46, 92, 22]}>
      <ComboArrow>
        <svg width="9" height="6" viewBox="0 0 9 6">
          <path d="M1 1l3.500 3.500L8 1" fill="none" stroke="#555" strokeWidth="1.300" />
        </svg>
      </ComboArrow>
      <select id="code">
        <option>CustCode</option>
      </select>
    </Combo>
    {LABELS.map(([id, text, at]) => (
      <Label key={id} htmlFor={id} $at={at}>
        {text}
      </Label>
    ))}
    <TypeLabel htmlFor="movement" $at={[380, 23, 74, 20]}>
      نوع الفاتورة
    </TypeLabel>
    <FormTitle $at={[240, 0, 384, 27]}>فاتورة مبيعات نقدية</FormTitle>
    <Line $at={[10, 142, 757, 9]} />
    <InvoiceLines />
    <Line $at={[6, 386, 757, 7]} />
    {TOTALS.map(([id, at]) => (
      <Field key={id} id={id} $total $at={at} defaultValue="oiceTF].[Form" />
    ))}
    <PlainButton $at={[704, 398, 33, 26]}>جد</PlainButton>
    <RedButton $big $at={[387, 398, 97, 37]}>
      الرئيسية
    </RedButton>
    <RedButton aria-label="Notebook" $at={[531, 394, 61, 29]}>
      <BookIcon />
    </RedButton>
    <RedButton $at={[649, 398, 60, 29]}>حذف</RedButton>
    <Line $at={[361, 436, 395, 3]} />
    <Line $at={[361, 466, 395, 3]} />
    <AmountField
      aria-label="Amount in words"
      $at={[360, 441, 393, 24]}
      defaultValue={
        '=ArbNum2Text([Texte0];2;3;"جنيه\u200e";"جنيهات\u200e";0;"قرش\u200e";"قروش\u200e")'
      }
    />
    <Ring $at={[52, 386, 312, 96]} viewBox="0 0 312 96">
      <ellipse cx="156" cy="48" rx="151" ry="43" fill="none" stroke="#ed1c24" strokeWidth="5" />
    </Ring>
  </Canvas>
);

const Document = () => (
  <Doc>
    <DocTabs>
      <DocTab>
        <FormIcon />
        InvoiceHF
      </DocTab>
      <button aria-label="Close tab">
        <svg width="8" height="8" viewBox="0 0 8 8">
          <path d="M.5.5l7 7M7.500.5l-7 7" stroke="#333" strokeWidth="1.300" />
        </svg>
      </button>
    </DocTabs>
    <DocBody>
      <DocMain>
        <RulerRow $height={21}>
          <Corner>
            <svg width="6" height="6" viewBox="0 0 6 6">
              <path d="M0 0h6v6H0z" />
            </svg>
          </Corner>
          <Ruler units={22} inset={5} />
        </RulerRow>
        <Row>
          <SideRuler>
            <SideUnits units={13} skip />
            <SideTick $length={2} />
            <SideTick $length={5} />
          </SideRuler>
          <CanvasArea>
            <Design />
          </CanvasArea>
        </Row>
        <ScrollBar across size={519} after={280} />
      </DocMain>
      <ScrollBar before={34} size={302} after={145} />
    </DocBody>
  </Doc>
);

const Tasks = () => (
  <TaskBar>
    <TaskButton $width={47} aria-label="Start">
      <Windows />
    </TaskButton>
    <TaskButton $width={47} aria-label="Search">
      <Search />
    </TaskButton>
    <TaskButton $width={47} aria-label="Task View">
      <TaskView />
    </TaskButton>
    <TaskButton $width={51} aria-label="Edge">
      <Edge />
    </TaskButton>
    <TaskButton $width={42} $open aria-label="File Explorer">
      <Folder />
    </TaskButton>
    <TaskButton $width={52} aria-label="Firefox">
      <Firefox />
    </TaskButton>
    <TaskButton aria-label="Chrome">
      <Chrome />
    </TaskButton>
    <TaskButton $open $on aria-label="Access">
      <AccessIcon size={22} />
    </TaskButton>
    <Tray>
      <svg width="12" height="8" viewBox="0 0 12 8" fill="none" stroke="#e8e8e8" strokeWidth="1.300">
        <path d="M1 7l5-5 5 5" />
      </svg>
      <svg width="16" height="12" viewBox="0 0 16 12" fill="none" stroke="#e8e8e8">
        <path d="M5 3.500h9.500v7H5M2 1v3h3V1M3.500 4v7M7 5l4 4M11 5L7 9M15.500 5v4" />
      </svg>
      <svg width="16" height="14" viewBox="0 0 16 14" fill="none" stroke="#999">
        <path d="M2 7q4-6 12-6M5 9q3-4 9-4M8 11q2-3 6-3M11 13q1-2 3-2" />
        <circle cx="4.500" cy="9.500" r="4.500" fill="#d8232a" stroke="none" />
        <path d="M3 8l3 3M6 8l-3 3" stroke="#fff" />
      </svg>
      <svg width="17" height="14" viewBox="0 0 17 14" fill="none" stroke="#e8e8e8">
        <path d="M1 5v4h2l4 4V1L3 5zM9 5q1 2 0 4M11 3q3 4 0 8M13 1q5 6 0 12" />
      </svg>
      <svg width="16" height="16" viewBox="0 0 16 16">
        <path d="M0 0h16v12h-5l-3 4-3-4H0z" fill="#fff" />
        <path d="M3 3.500h10M3 6h10M3 8.500h6" stroke="#222" />
      </svg>
      <span>ENG</span>
      <Clock>
        04:48 م
        <br />
        ٢٠١٦/٠٨/١٠
      </Clock>
    </Tray>
  </TaskBar>
);

const App = () => (
  <>
    <GlobalStyle />
    <Shell>
      <TopBar />
      <Ribbon />
      <Work>
        <Navigation />
        <Document />
      </Work>
      <StatusBar>
        <StatusPart $grow={6}>Design View</StatusPart>
        <StatusPart $grow={5} $align="right">
          Num Lock
        </StatusPart>
        <ViewButtons>
          {["form", "data", "pivot", "chart", "design"].map((kind) => (
            <ViewButton key={kind} $on={kind === "design"} aria-label={kind}>
              <MiniView kind={kind} />
            </ViewButton>
          ))}
        </ViewButtons>
      </StatusBar>
      <Tasks />
    </Shell>
  </>
);

export default App;
